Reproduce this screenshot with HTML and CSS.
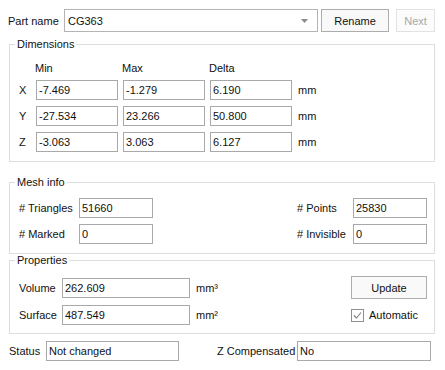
FILE: index.html
```html
<!DOCTYPE html>
<html lang="en">
  <head>
    <meta charset="UTF-8" />
    <title>Part info</title>
    <link rel="stylesheet" href="styles.css">
  </head>
  <body>
    <div class="part-row">
      <span class="part-label">Part name</span>
      <div class="combo">
        <span>CG363</span>
        <svg class="combo-arrow" width="7" height="4" viewBox="0 0 7 4">
          <path d="M0 0 L7 0 L3.5 4 Z" fill="#8a8a8a" />
        </svg>
      </div>
      <button class="btn rename">Rename</button>
      <button class="btn next" disabled>Next</button>
    </div>

    <!-- Dimensions -->
    <fieldset class="group dims">
      <legend>Dimensions</legend>
      <div class="dim-grid">
        <span></span>
        <span class="head">Min</span>
        <span class="head">Max</span>
        <span class="head">Delta</span>
        <span></span>

        <span class="axis">X</span>
        <input class="field" value="-7.469" readonly />
        <input class="field" value="-1.279" readonly />
        <input class="field" value="6.190" readonly />
        <span class="unit">mm</span>

        <span class="axis">Y</span>
        <input class="field" value="-27.534" readonly />
        <input class="field" value="23.266" readonly />
        <input class="field" value="50.800" readonly />
        <span class="unit">mm</span>

        <span class="axis">Z</span>
        <input class="field" value="-3.063" readonly />
        <input class="field" value="3.063" readonly />
        <input class="field" value="6.127" readonly />
        <span class="unit">mm</span>
      </div>
    </fieldset>

    <!-- Mesh info -->
    <fieldset class="group mesh">
      <legend>Mesh info</legend>
      <div class="mesh-grid">
        <span># Triangles</span>
        <input class="field" value="51660" readonly />
        <span></span>
        <span># Points</span>
        <input class="field" value="25830" readonly />

        <span># Marked</span>
        <input class="field" value="0" readonly />
        <span></span>
        <span># Invisible</span>
        <input class="field" value="0" readonly />
      </div>
    </fieldset>

    <!-- Properties -->
    <fieldset class="group props">
      <legend>Properties</legend>
      <div class="props-grid">
        <span>Volume</span>
        <input class="field" value="262.609" readonly />
        <span class="unit">mm³</span>
        <span></span>
        <button class="btn update">Update</button>

        <span>Surface</span>
        <input class="field" value="487.549" readonly />
        <span class="unit">mm²</span>
        <span></span>
        <label class="check">
          <svg width="13" height="13" viewBox="0 0 13 13">
            <rect x="0.5" y="0.5" width="12" height="12" fill="#fff" stroke="#8f8f8f" />
            <path d="M3 6.5 L5.5 9 L10 3.5" fill="none" stroke="#7a7a7a" stroke-width="1.1" />
          </svg>
          Automatic
        </label>
      </div>
    </fieldset>

    <div class="status-row">
      <span>Status</span>
      <input class="field" value="Not changed" readonly />
      <span></span>
      <span>Z Compensated</span>
      <input class="field" value="No" readonly />
    </div>
  </body>
</html>
```

FILE: styles.css
```css
body {
  margin: 0;
  background: #ffffff;
  color: #111;
  font-family: "Liberation Sans", Arial, sans-serif;
  font-size: 11px;
  width: 445px;
  height: 370px;
}

.part-row {
  display: flex;
  align-items: center;
  padding: 9px 0 0 8px;
}
.part-label {
  width: 56px;
}
.combo {
  box-sizing: border-box;
  width: 254px;
  height: 23px;
  border: 1px solid #b4b4b4;
  display: flex;
  align-items: center;
  justify-content: space-between;
  padding: 0 9px 0 3px;
}
.combo-arrow {
  display: block;
}

.btn {
  box-sizing: border-box;
  height: 23px;
  font-family: inherit;
  font-size: 11px;
  color: #111;
  background: #f9f9f9;
  border: 1px solid #adadad;
  padding: 0;
}
.rename {
  width: 68px;
  margin-left: 3px;
}
.next {
  width: 39px;
  margin-left: 7px;
  color: #a6a6a6;
  background: #fcfcfc;
  border-color: #e2e2e2;
}

.group {
  margin: 0 10px 0 9px;
  border: 1px solid #dedede;
  padding: 9px 7px 9px 9px;
  min-width: 0;
}
.group legend {
  padding: 0 2px;
  margin-left: -4px;
  line-height: 13px;
}
.dims {
  margin-top: 6px;
  padding-top: 10px;
}
.mesh {
  margin-top: 14px;
}
.props {
  padding-bottom: 8px;
}

.field {
  box-sizing: border-box;
  height: 20px;
  width: 100%;
  margin: 0;
  border: 1px solid #a9a9a9;
  padding: 0 2px;
  font-family: inherit;
  font-size: 11px;
  color: #111;
  background: #fff;
  outline: none;
}

.dim-grid {
  display: grid;
  grid-template-columns: 12px 82px 82px 82px auto;
  grid-template-rows: 13px 20px 20px 20px;
  column-gap: 5px;
  row-gap: 6px;
  align-items: center;
}
.head {
  margin-left: -1px;
}
.unit {
  padding-left: 1px;
}

.mesh-grid {
  display: grid;
  grid-template-columns: 60px 74px 1fr 56px 74px;
  grid-auto-rows: 20px;
  row-gap: 6px;
  align-items: center;
}

.props-grid {
  display: grid;
  grid-template-columns: 43px 128px auto 1fr 76px;
  grid-template-rows: 23px 20px;
  row-gap: 6px;
  align-items: center;
}
.props-grid .unit {
  padding-left: 6px;
}
.update {
  width: 76px;
}
.check {
  display: flex;
  align-items: center;
  gap: 5px;
  white-space: nowrap;
}
.check svg {
  display: block;
}

.status-row {
  display: grid;
  grid-template-columns: 37px 133px 1fr 80px 134px;
  height: 20px;
  align-items: center;
  margin-top: 7px;
  padding: 0 14px 0 9px;
}
```
